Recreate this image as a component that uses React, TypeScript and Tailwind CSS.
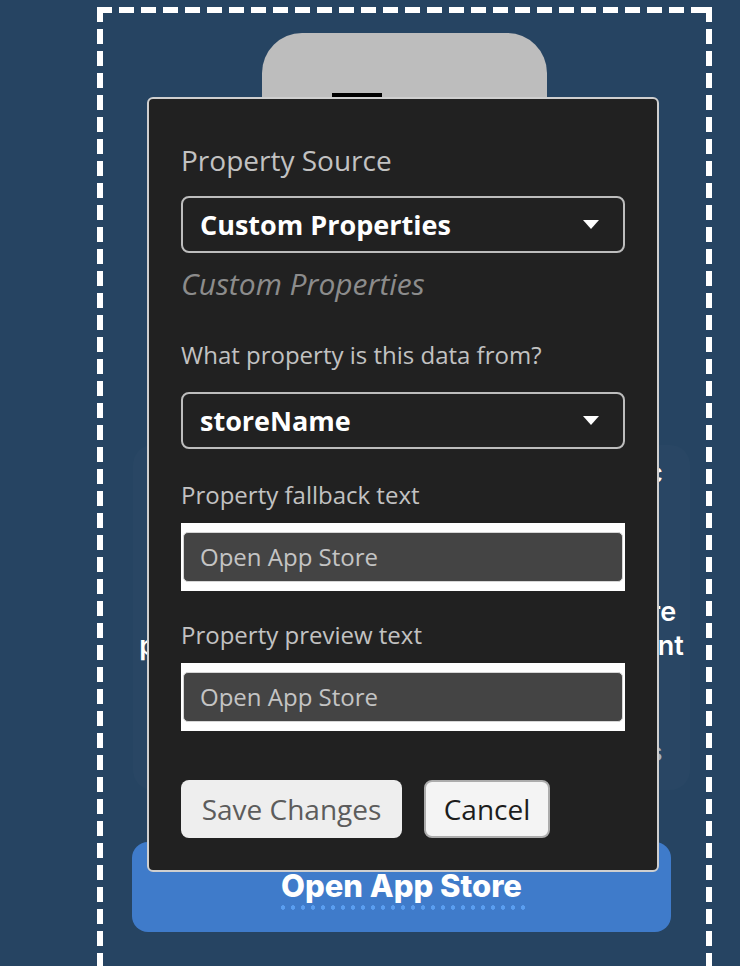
import React from 'react';

const sans = 'font-["Open_Sans","Noto_Sans",sans-serif]';

function Caret() {
  return (
    <svg width="16" height="9" viewBox="0 0 16 9" className="shrink-0">
      <path d="M0 0H16L8 9Z" fill="#ffffff" />
    </svg>
  );
}

function SelectBox({ value }: { value: string }) {
  return (
    <div className="flex h-[57px] items-center justify-between rounded-[8px] border-2 border-[#bdbdbd] pl-[17px] pr-[24px]">
      <span className="text-[27px] font-bold leading-none text-white">{value}</span>
      <Caret />
    </div>
  );
}

function TextField({ value }: { value: string }) {
  return (
    <div className="bg-white px-[2px] py-[9px]">
      <div className="flex h-[50px] items-center rounded-[5px] border border-[#d6d6d6] bg-[#444444] pl-[16px] text-[24px] leading-none text-[#c4c4c4]">
        {value}
      </div>
    </div>
  );
}

export default function App() {
  return (
    <div className="relative h-[966px] w-[740px] overflow-hidden bg-[#264462]">
      {/* preview canvas behind the dialog, dashed frame drawn with gradients */}
      <div className="ml-[97px] mt-[7px] h-[1000px] w-[615px] p-[6px] [background:repeating-linear-gradient(90deg,#fff_0_15px,transparent_15px_22px)_top_left/100%_6px_no-repeat,repeating-linear-gradient(180deg,#fff_0_15px,transparent_15px_22px)_top_left/6px_100%_no-repeat,repeating-linear-gradient(180deg,#fff_0_15px,transparent_15px_22px)_top_right/6px_100%_no-repeat]">
        <div className="ml-[159px] mt-[20px] h-[80px] w-[285px] rounded-t-[40px] bg-[#bdbdbd] pt-[60px]">
          <div className="ml-[70px] h-[4px] w-[50px] bg-black" />
        </div>

        <div className="ml-[30px] mt-[332px] flex h-[345px] w-[557px] flex-col items-center rounded-[20px] bg-white/[0.015] font-['Inter',sans-serif] font-semibold text-white">
          <div className="mt-[10px] whitespace-nowrap text-[28px] leading-[36px]">Visit our app for exclusive new music</div>
          <div className="mt-[104px] whitespace-nowrap text-[27px] leading-[34px]">continue to shop with us at the app store</div>
          <div className="whitespace-nowrap text-[27px] leading-[34px]">purchases and manage your own account</div>
          <div className="mt-[74px] whitespace-nowrap text-[25px] font-medium leading-[30px] text-white/60">Available now on iOS and Android devices</div>
        </div>

        <div className="ml-[29px] mt-[52px] flex h-[90px] w-[539px] flex-col items-center justify-center rounded-[16px] bg-[#3f7bca]">
          <span className="mt-[3px] font-['Inter',sans-serif] text-[31px] font-extrabold leading-[36px] text-white">Open App Store</span>
          <div className="mt-[1px] h-[5px] w-[248px] bg-[radial-gradient(circle,#5a9ef0_2px,transparent_2.5px)] bg-[length:10px_5px]" />
        </div>
      </div>

      {/* dialog */}
      <div className={`absolute left-[147px] top-[97px] h-[775px] w-[512px] rounded-[6px] border-2 border-[#cfcfcf] bg-[#212121] px-[32px] pt-[42px] ${sans}`}>
        <div className="text-[28px] leading-[38px] text-[#c2c2c2]">Property Source</div>
        <div className="mt-[17px]">
          <SelectBox value="Custom Properties" />
        </div>
        <div className="mt-[12px] text-[30px] italic leading-[38px] text-[#8c8c8c]">Custom Properties</div>

        <div className="mt-[35px] text-[24px] leading-[34px] text-[#c2c2c2]">What property is this data from?</div>
        <div className="mt-[20px]">
          <SelectBox value="storeName" />
        </div>

        <div className="mt-[29px] text-[24px] leading-[34px] text-[#c2c2c2]">Property fallback text</div>
        <div className="mt-[11px]">
          <TextField value="Open App Store" />
        </div>

        <div className="mt-[27px] text-[24px] leading-[34px] text-[#c2c2c2]">Property preview text</div>
        <div className="mt-[11px]">
          <TextField value="Open App Store" />
        </div>

        <div className="mt-[49px] flex gap-[22px]">
          <button className="h-[58px] w-[221px] rounded-[8px] bg-[#eeeeee] text-[28px] leading-none text-[#5c5c5c]">
            Save Changes
          </button>
          <button className="h-[58px] w-[126px] rounded-[8px] border-2 border-[#acacac] bg-[#f4f4f4] text-[28px] leading-none text-[#1c1c1c]">
            Cancel
          </button>
        </div>
      </div>
    </div>
  );
}
